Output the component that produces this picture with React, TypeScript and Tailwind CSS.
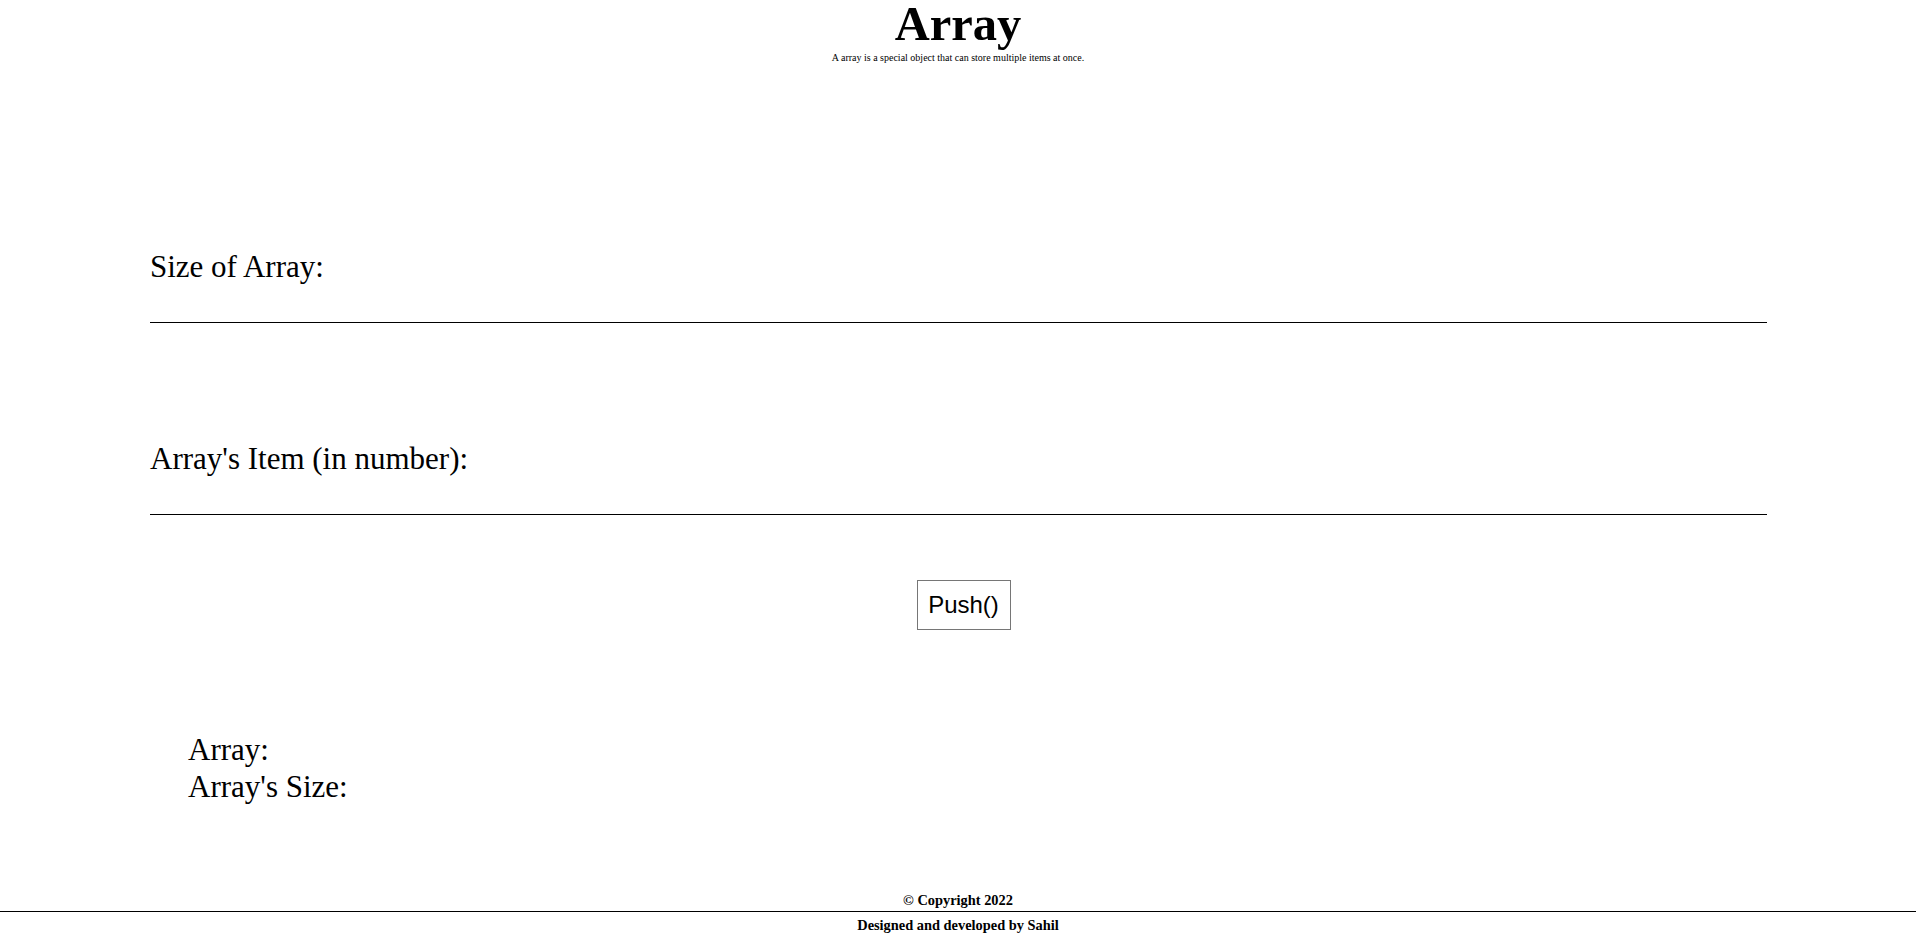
import React from "react";

export default function App() {
  const serif = { fontFamily: '"Liberation Serif", "Times New Roman", serif' };
  return (
    <div className="w-full min-h-[935px] bg-white text-black flex flex-col" style={serif}>
      <header className="flex flex-col items-center">
        <h1 className="text-[48.5px] leading-[48px] font-bold">Array</h1>
        <p className="mt-[4px] text-[10px] leading-[12px]">A array is a special object that can store multiple items at once.</p>
      </header>

      <main className="ml-[150px] mr-[149px] mt-[185px] flex flex-col">
        <label className="text-[31px] leading-[36px]">Size of Array:</label>
        <div className="h-[38px] border-b border-black"></div>

        <label className="mt-[118px] text-[31px] leading-[36px]">Array's Item (in number):</label>
        <div className="h-[38px] border-b border-black"></div>

        <div className="mt-[65px] flex justify-center pl-[10px]">
          <button
            className="w-[94px] h-[50px] border border-[#767676] bg-white flex items-center justify-center text-[24px] text-black"
            style={{ fontFamily: '"Liberation Sans", Arial, sans-serif' }}
          >
            Push()
          </button>
        </div>

        <div className="mt-[101px] pl-[38px] flex flex-col text-[31px] leading-[37px]">
          <span>Array:</span>
          <span>Array's Size:</span>
        </div>
      </main>

      <footer className="mt-auto flex flex-col items-center pb-[2px]">
        <p className="text-[14.4px] leading-[16px] font-bold">© Copyright 2022</p>
        <div className="w-full mt-[3px] border-t border-black"></div>
        <p className="mt-[5px] text-[14.4px] leading-[16px] font-bold">Designed and developed by Sahil</p>
      </footer>
    </div>
  );
}
